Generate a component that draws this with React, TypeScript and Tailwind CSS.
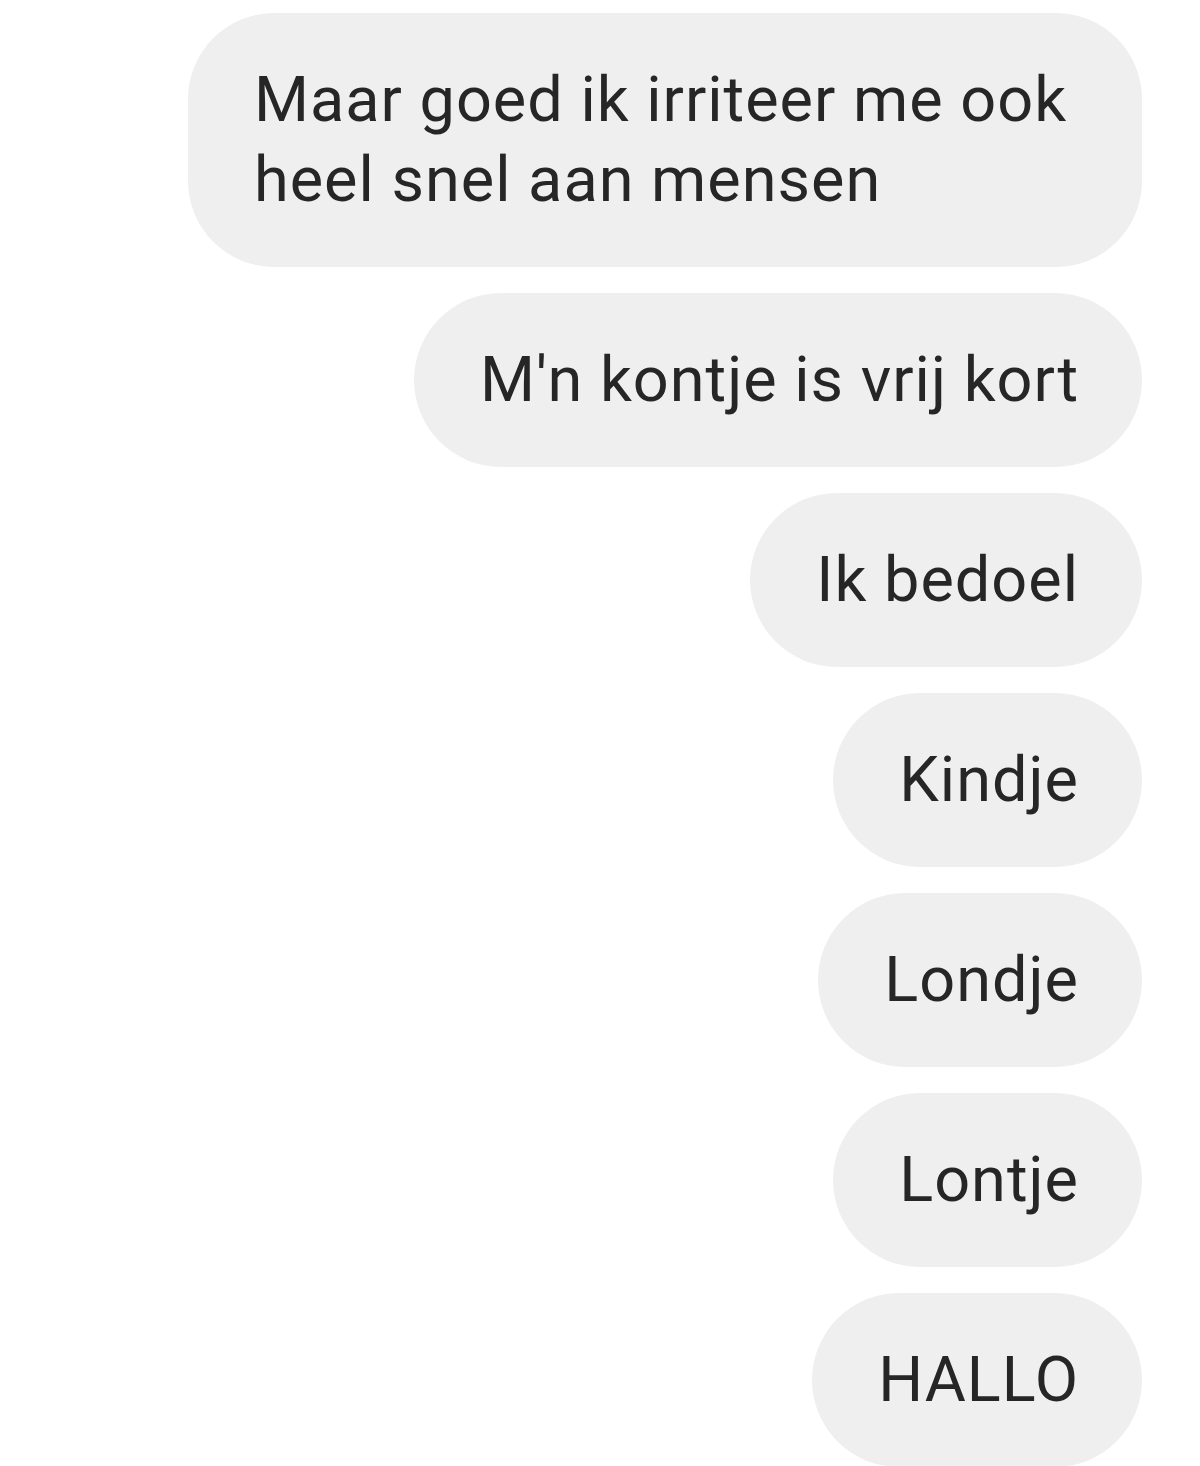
import React from 'react';

const messages = [
  'Maar goed ik irriteer me ook heel snel aan mensen',
  "M'n kontje is vrij kort",
  'Ik bedoel',
  'Kindje',
  'Londje',
  'Lontje',
  'HALLO',
];

const App: React.FC = () => {
  return (
    <div className="min-h-screen bg-white flex flex-col items-end gap-[26px] pt-[13px] pr-[58px] font-['Roboto',sans-serif]">
      {messages.map((m, i) => (
        <div
          key={i}
          className={`bg-[#efefef] text-[#262626] text-[63px] leading-[80px] tracking-[1px] pl-[66px] pr-[63px] py-[47px] max-w-[954px] ${
            i === 0 ? 'rounded-[86px]' : 'rounded-full'
          }`}
        >
          {m}
        </div>
      ))}
    </div>
  );
};

export default App;
